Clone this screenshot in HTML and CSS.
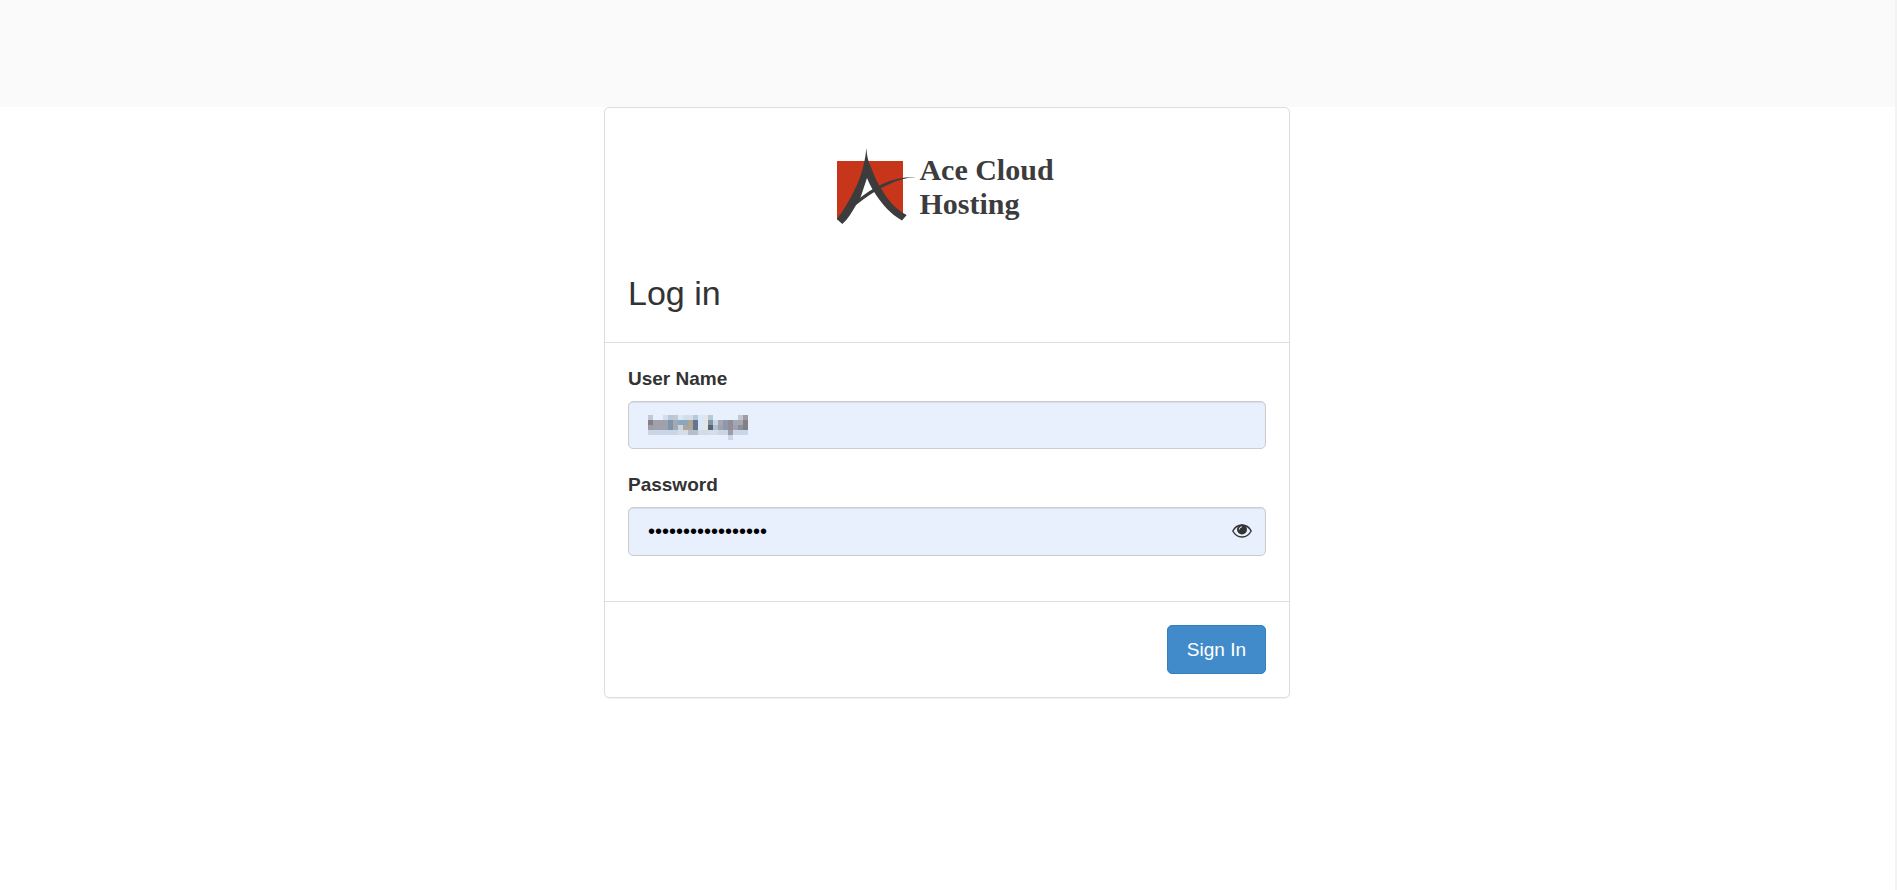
FILE: index.html
```html
<!DOCTYPE html>
<html lang="en">

<head>
  <meta charset="UTF-8">
  <meta name="viewport" content="width=device-width, initial-scale=1.0">
  <title>Log in</title>
  <link rel="stylesheet" href="styles.css">
</head>

<body>
  <header class="topbar"></header>
  <main>
    <form class="card" action="#">
      <div class="card-header">
        <div class="logo">
          <svg class="logo-mark" width="80" height="78" viewBox="0 0 80 78" aria-hidden="true">
            <path fill="#c7361b" d="M1 13h66v53L54 58 42 44 31 22 18 50 1 72z" />
            <path fill="#3c3c3c" d="M30.300 0C31 8 32 13 35 19C38 28 42 36 46 42C53 54 61 62 70.700 67L66 72.500C60 69 55 65 50.700 60.500C43 52 36 42 31 30L24.700 49L20.700 56C16 64 12 71 6.300 76L.7 71C6 65 11 56 16 47C23 34 29 18 30.300 0z" />
            <path fill="#3c3c3c" d="M20 53C38 38 58 28 80 29C61 30 40 41 20 57z" />
          </svg>
          <span class="logo-text">Ace Cloud<br>Hosting</span>
        </div>
        <h1>Log in</h1>
      </div>
      <div class="card-body">
        <label for="username">User Name</label>
        <div class="field">
          <input type="text" id="username" name="username">
          <!-- masked user name, one unit per block -->
          <svg class="mask" width="100" height="25" viewBox="0 0 20 5" shape-rendering="crispEdges" aria-hidden="true">
            <path fill="#c2c7d0" d="M0 0h1v1H0zM5 0h1v1H5zM18 0h1v1H18z" />
            <path fill="#d6dde9" d="M3 0h1v1H3zM7 0h2v1H7zM6 3h2v1H6zM12 3h2v1H12z" />
            <path fill="#b7c9d8" d="M4 0h1v1H4zM12 0h1v1H12zM9 0h1v1H9z" />
            <path fill="#d8e8fb" d="M6 0h1v1H6zM10 0h1v3H10z" />
            <path fill="#e6e5e6" d="M11 0h1v3H11z" />
            <path fill="#847f87" d="M0 1h1v1H0zM19 1h1v2H19z" />
            <path fill="#a39aa5" d="M19 0h1v1H19zM0 2h1v1H0zM16 3h1v1H16z" />
            <path fill="#9fa2ad" d="M1 1h3v2H1zM14 2h1v1H14zM17 2h1v1H17z" />
            <path fill="#7d95a6" d="M4 1h1v2H4zM12 1h1v1H12z" />
            <path fill="#a3a9b2" d="M5 1h1v2H5zM14 1h1v1H14zM17 1h2v1H17z" />
            <path fill="#8aa7bd" d="M6 1h1v1H6zM7 1h1v1H7z" />
            <path fill="#c9d6e8" d="M6 2h1v1H6zM13 1h1v1H13zM0 3h6v1H0zM14 3h2v1H14zM17 3h3v1H17zM16 4h1v1H16z" />
            <path fill="#ada59a" d="M7 2h1v1H7zM8 1h1v2H8z" />
            <path fill="#68738f" d="M9 1h1v2H9z" />
            <path fill="#566478" d="M12 2h1v1H12z" />
            <path fill="#b5becb" d="M13 2h1v1H13zM8 3h2v1H8z" />
            <path fill="#9296ae" d="M15 1h1v2H15z" />
            <path fill="#908c9a" d="M16 1h1v2H16zM18 2h1v1H18z" />
            <path fill="#d3dbe5" d="M10 3h2v1H10z" />
          </svg>
        </div>
        <label for="password">Password</label>
        <div class="field">
          <input type="password" id="password" name="password" value="12345678901234567">
          <button type="button" class="eye" aria-label="Show password">
            <svg width="20" height="14" viewBox="0 0 20 14">
              <path fill="none" stroke="#333" stroke-width="1.400" d="M.8 7C5 -1 15 -1 19.200 7C15 15 5 15 .8 7z" />
              <circle cx="10" cy="5.500" r="5" fill="#333" />
              <path fill="none" stroke="#e8f0fe" d="M7.300 5.500A2.700 2.700 0 0 1 10 2.800" />
            </svg>
          </button>
        </div>
      </div>
      <div class="card-footer">
        <button type="submit" class="btn">Sign In</button>
      </div>
    </form>
  </main>
</body>

</html>
```
FILE: styles.css
```css
* {
  box-sizing: border-box;
}

body {
  margin: 0;
  min-height: 100vh;
  border-right: 2px solid #f3f3f3;
  background-color: #fff;
  color: #333;
  font-family: "Liberation Sans", Arial, sans-serif;
  font-size: 19px;
  line-height: 27px;
}

.topbar {
  height: 107px;
  background-color: #fafafa;
}

main {
  padding-right: 1px;
}

.card {
  max-width: 686px;
  margin: 0 auto;
  border: 1px solid #ddd;
  border-radius: 5px;
  background-color: #fff;
  box-shadow: 0 1px 1px rgba(0, 0, 0, 0.05);
}

.card-header {
  padding: 40px 23px 30px;
  border-bottom: 1px solid #ddd;
}

.logo {
  display: flex;
  justify-content: center;
  gap: 3px;
  padding-right: 4px;
}

.logo-text {
  padding-top: 5px;
  color: #3c3c3c;
  font-family: "Liberation Serif", "Times New Roman", serif;
  font-size: 30px;
  font-weight: bold;
  line-height: 34px;
}

h1 {
  margin: 48px 0 0;
  font-size: 34px;
  font-weight: normal;
  line-height: 38px;
}

.card-body {
  padding: 22px 23px 45px;
  border-bottom: 1px solid #ddd;
}

label {
  display: block;
  margin-bottom: 9px;
  font-weight: bold;
}

.field {
  position: relative;
}

.field + label {
  margin-top: 22px;
}

input {
  display: block;
  width: 100%;
  height: 48px;
  padding: 7px 19px;
  border: 1px solid #ccc;
  border-radius: 5px;
  background-color: #e8f0fe;
  box-shadow: inset 0 1px 1px rgba(0, 0, 0, 0.08);
  color: #000;
  font: inherit;
}

input[type="password"] {
  height: 49px;
  font-size: 20px;
}

.mask {
  position: absolute;
  top: 14px;
  left: 20px;
  pointer-events: none;
}

.eye {
  position: absolute;
  top: 17px;
  right: 14px;
  display: flex;
  padding: 0;
  border: 0;
  background: none;
  cursor: pointer;
}

.card-footer {
  display: flex;
  justify-content: flex-end;
  padding: 23px;
}

.btn {
  height: 49px;
  padding: 0 19px;
  border: 1px solid #357ebd;
  border-radius: 5px;
  background-color: #428bca;
  color: #fff;
  font: inherit;
  cursor: pointer;
}
```
